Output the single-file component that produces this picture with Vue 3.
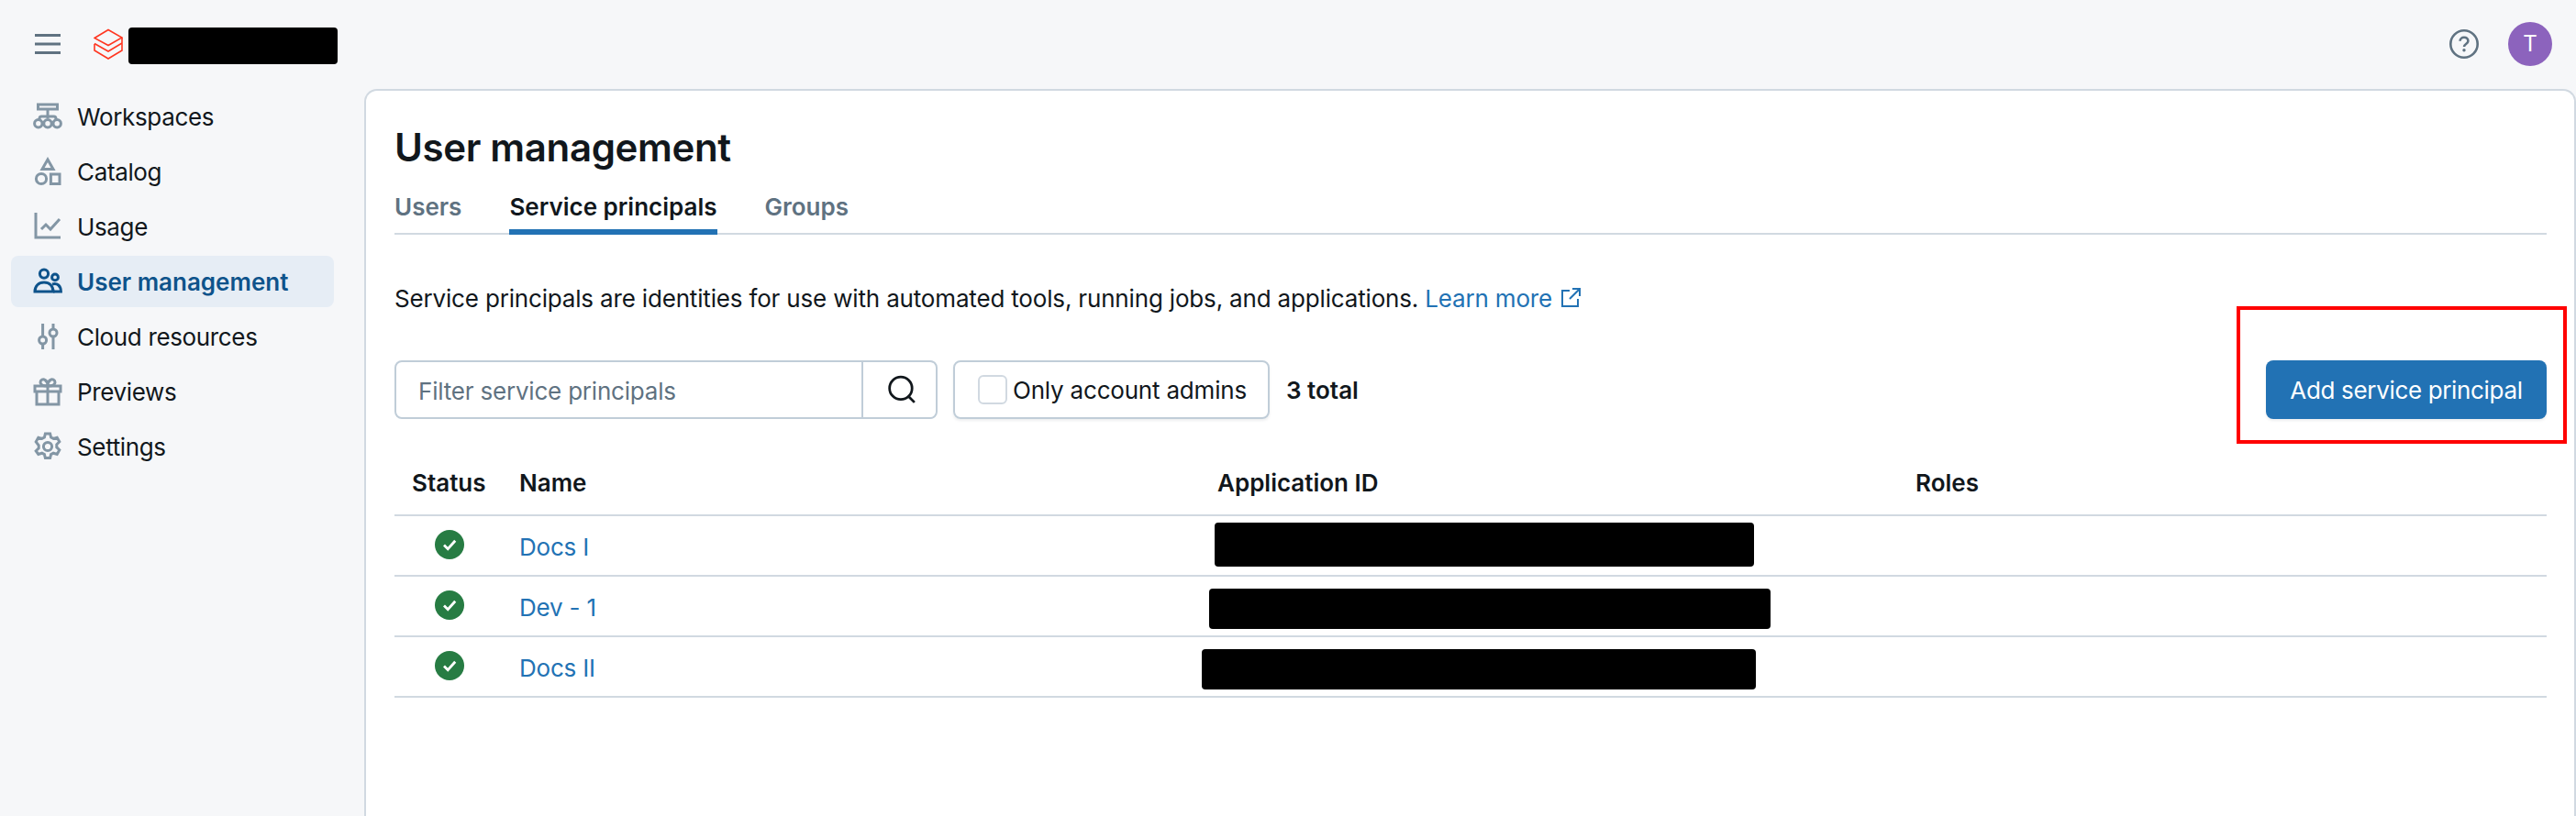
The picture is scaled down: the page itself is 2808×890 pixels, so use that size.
<template>
  <div class="page">
    <header class="topbar">
      <div class="brand">
        <svg class="burger" viewBox="0 0 28 22" fill="none" stroke="#5f7281" stroke-width="3">
          <path d="M0 1.500h28M0 11h28M0 20.500h28" />
        </svg>
        <svg class="logo" viewBox="0 0 32 34" fill="none" stroke="#ff3621" stroke-width="1.600">
          <path d="M1 10.500 16 1.500l15 8.500-15 8.500L1 10.500Z" />
          <path d="M31 10v6l-15 9-15-8.500" />
          <path d="M31 16.500v7.500l-15 9-15-9v-7" />
        </svg>
        <div class="brand-redact"></div>
      </div>
      <div class="top-actions">
        <svg class="help" viewBox="0 0 32 32" fill="none">
          <circle cx="16" cy="16" r="14.700" stroke="#5f7281" stroke-width="2.600" />
          <path d="M11.600 12.800c0-2.500 2-4 4.400-4s4.400 1.500 4.400 3.900c0 3.300-4.400 3.300-4.400 6.300" stroke="#5f7281" stroke-width="2.600" />
          <circle cx="16" cy="22.800" r="1.700" fill="#5f7281" />
        </svg>
        <div class="avatar">T</div>
      </div>
    </header>

    <div class="body">
      <nav class="sidebar">
        <a v-for="item in navItems" :key="item.label" class="nav-item" :class="{ active: item.active }">
          <svg class="nav-icon" viewBox="0 0 16 16" fill="none" stroke="currentColor" stroke-width="1.500">
            <path v-for="d in item.paths" :key="d" :d="d" />
          </svg>
          <span>{{ item.label }}</span>
        </a>
      </nav>

      <main class="panel">
        <h1>User management</h1>
        <div class="tabs">
          <a class="tab">Users</a>
          <a class="tab current">Service principals</a>
          <a class="tab">Groups</a>
        </div>

        <p class="intro">
          Service principals are identities for use with automated tools, running jobs, and applications.
          <a class="link">Learn more
            <svg class="ext" viewBox="0 0 22 22" fill="none" stroke="#2272b4" stroke-width="2">
              <path d="M10 3H2v17h17v-8" />
              <path d="M13 1h8v8M21 1 10 12" />
            </svg>
          </a>
        </p>

        <div class="toolbar">
          <div class="filter">
            <span class="placeholder">Filter service principals</span>
            <button class="search">
              <svg viewBox="0 0 30 30" fill="none" stroke="#11171c" stroke-width="2.600">
                <circle cx="14" cy="13.500" r="11.500" />
                <path d="m22 22 6 6" />
              </svg>
            </button>
          </div>
          <label class="admins">
            <span class="box"></span>
            <span class="admins-text">Only account admins</span>
          </label>
          <span class="total">3 total</span>
          <button class="primary">Add service principal</button>
        </div>

        <div class="table">
          <div class="row head">
            <div class="status-head">Status</div>
            <div>Name</div>
            <div>Application ID</div>
            <div>Roles</div>
          </div>
          <div v-for="row in rows" :key="row.name" class="row">
            <div class="status">
              <svg viewBox="0 0 32 32">
                <circle cx="16" cy="16" r="16" fill="#277c43" />
                <path d="m10 16.500 4.200 4.200 8-9" fill="none" stroke="#fff" stroke-width="2.800" />
              </svg>
            </div>
            <div class="name-cell"><a class="link">{{ row.name }}</a></div>
            <div class="id-cell">
              <div
                class="redact"
                :style="{ marginLeft: row.left + 'px', marginTop: row.top + 'px', width: row.width + 'px', height: row.height + 'px' }"
              ></div>
            </div>
            <div></div>
          </div>
        </div>

        <div class="callout"></div>
      </main>
    </div>
  </div>
</template>

<script setup>
const navItems = [
  {
    label: 'Workspaces',
    paths: [
      'M2.750 1.500h10.500v2.500h-10.500z',
      'M8 4v5M3.500 10V9.200Q3.500 8 4.700 8h6.600Q12.500 8 12.500 9.200V10',
      'M2.900 9.800a2.100 2.100 0 1 0 0 4.200 2.100 2.100 0 0 0 0-4.200ZM8 9.800a2.100 2.100 0 1 0 0 4.200 2.100 2.100 0 0 0 0-4.200ZM13.100 9.800a2.100 2.100 0 1 0 0 4.200 2.100 2.100 0 0 0 0-4.200Z'
    ]
  },
  {
    label: 'Catalog',
    paths: [
      'M8 1.500 11 6.700H5L8 1.500Z',
      'M4.500 9.200a2.800 2.800 0 1 0 0 5.600 2.800 2.800 0 0 0 0-5.600Z',
      'M9.700 9.500h4.800v5.300H9.700z'
    ]
  },
  {
    label: 'Usage',
    paths: ['M1.500 .500v13.500H15', 'M4.500 9.500 7 7l2.500 2.500L14.500 4']
  },
  {
    label: 'User management',
    active: true,
    paths: [
      'M6 1.500a2.300 2.300 0 1 0 0 4.600 2.300 2.300 0 0 0 0-4.600Z',
      'M12 4a1.700 1.700 0 1 0 0 3.400A1.700 1.700 0 0 0 12 4Z',
      'M1 13.500c0-3 2-5 5-5s5 2 5 5H1Z',
      'M10.500 9.500c2.700-.800 4.700.800 4.700 4h-4.200'
    ]
  },
  {
    label: 'Cloud resources',
    paths: [
      'M5.300 1v7M5.300 12v3',
      'M5.300 8a2 2 0 1 0 0 4 2 2 0 0 0 0-4Z',
      'M11 1v3M11 8v7',
      'M11 4a2 2 0 1 0 0 4 2 2 0 0 0 0-4Z'
    ]
  },
  {
    label: 'Previews',
    paths: [
      'M1 5h14v3H1z',
      'M2 8v7h12V8M8 5v10',
      'M8 5C6 5 4 4.500 4 3c0-1.300 1.500-2 2.500-1.300C7.500 2.300 8 3.500 8 5Zm0 0c2 0 4-.500 4-2 0-1.300-1.500-2-2.500-1.300C8.500 2.300 8 3.500 8 5Z'
    ]
  },
  {
    label: 'Settings',
    paths: [
      'M8 5.700a2.300 2.300 0 1 0 0 4.600 2.300 2.300 0 0 0 0-4.600Z',
      'M6.700 1h2.600l.5 2 1.300.7 2-.6 1.300 2.300-1.500 1.500v1.500l1.500 1.500-1.300 2.300-2-.6-1.300.7-.5 2H6.700l-.5-2-1.300-.7-2 .6L1.600 10.400l1.500-1.500V7.400L1.600 5.400l1.300-2.300 2 .6 1.300-.7.500-2Z'
    ]
  }
]

const rows = [
  { name: 'Docs I', left: -3, top: -2, width: 588, height: 48 },
  { name: 'Dev - 1', left: -9, top: 6, width: 612, height: 44 },
  { name: 'Docs II', left: -17, top: 6, width: 604, height: 44 }
]
</script>

<style scoped>
.page {
  width: 2808px;
  height: 890px;
  overflow: hidden;
  display: flex;
  flex-direction: column;
  background: #f6f7f9;
  color: #11171c;
  font-family: Inter, "Liberation Sans", sans-serif;
  font-size: 26px;
  letter-spacing: -0.2px;
}

.topbar {
  height: 97px;
  flex: none;
  display: flex;
  align-items: center;
  justify-content: space-between;
  padding: 0 26px 2px 38px;
  box-sizing: border-box;
}

.brand {
  display: flex;
  align-items: center;
}

.burger {
  width: 28px;
  height: 22px;
}

.logo {
  width: 32px;
  height: 34px;
  margin-left: 36px;
}

.brand-redact {
  width: 228px;
  height: 40px;
  margin: 4px 0 0 6px;
  background: #000;
  border-radius: 4px;
}

.top-actions {
  display: flex;
  align-items: center;
  gap: 32px;
}

.help {
  width: 32px;
  height: 32px;
}

.avatar {
  width: 48px;
  height: 48px;
  border-radius: 50%;
  background: #8c63bd;
  color: #fff;
  display: flex;
  align-items: center;
  justify-content: center;
  font-size: 24px;
}

.body {
  flex: 1;
  display: flex;
  min-height: 0;
}

.sidebar {
  width: 397px;
  flex: none;
  box-sizing: border-box;
  padding: 2px 33px 0 12px;
  display: flex;
  flex-direction: column;
  gap: 4px;
}

.nav-item {
  height: 56px;
  display: flex;
  align-items: center;
  gap: 16px;
  padding-left: 24px;
  border-radius: 8px;
  letter-spacing: -0.35px;
}

.nav-item .nav-icon {
  width: 32px;
  height: 32px;
  color: #8396a5;
  flex: none;
}

.nav-item.active {
  background: #e6edf5;
  color: #0e538b;
  font-weight: 600;
  letter-spacing: 0;
}

.nav-item.active .nav-icon {
  color: #0e538b;
}

.panel {
  flex: 1;
  position: relative;
  background: #fff;
  border: 2px solid #d1d9e1;
  border-bottom: 0;
  border-radius: 14px 14px 0 0;
  padding: 32px 30px 0 31px;
  box-sizing: border-box;
}

h1 {
  margin: 0;
  font-size: 42px;
  line-height: 60px;
  font-weight: 600;
  letter-spacing: -0.35px;
}

.tabs {
  display: flex;
  gap: 52px;
  height: 62px;
  margin-top: 3px;
  box-sizing: border-box;
  border-bottom: 2px solid #d1d9e1;
  align-items: flex-start;
}

.tab {
  height: 62px;
  box-sizing: border-box;
  padding-top: 15px;
  line-height: 34px;
  color: #5f7281;
  font-weight: 600;
  letter-spacing: 0;
}

.tab.current {
  color: #11171c;
  border-bottom: 6px solid #2272b4;
}

.intro {
  margin: 52px 0 0;
  line-height: 36px;
  letter-spacing: -0.17px;
}

.link {
  color: #2272b4;
}

.ext {
  width: 22px;
  height: 22px;
  margin-left: 2px;
  vertical-align: -1px;
}

.toolbar {
  display: flex;
  align-items: center;
  margin-top: 49px;
  height: 64px;
}

.filter {
  width: 592px;
  height: 64px;
  box-sizing: border-box;
  display: flex;
  align-items: center;
  border: 2px solid #c0cdd8;
  border-radius: 8px;
}

.placeholder {
  flex: 1;
  padding: 2px 0 0 24px;
  color: #5f7281;
}

.search {
  width: 81px;
  height: 100%;
  padding: 0 0 0 4px;
  background: none;
  border: 0;
  border-left: 2px solid #c0cdd8;
  display: flex;
  align-items: center;
  justify-content: center;
}

.search svg {
  width: 32px;
  height: 32px;
}

.admins {
  width: 345px;
  height: 64px;
  margin-left: 17px;
  box-sizing: border-box;
  display: flex;
  align-items: center;
  gap: 6px;
  padding-left: 25px;
  border: 2px solid #c0cdd8;
  border-radius: 8px;
  box-shadow: 0 2px 3px rgba(31, 39, 45, 0.08);
}

.admins-text {
  padding-top: 1px;
}

.box {
  width: 32px;
  height: 32px;
  box-sizing: border-box;
  border: 2px solid #d1d9e1;
  border-radius: 6px;
}

.total {
  margin-left: 18px;
  padding-top: 1px;
  font-weight: 600;
  letter-spacing: 0;
}

.primary {
  margin-left: auto;
  width: 306px;
  height: 64px;
  padding: 1px 0 0;
  background: #2272b4;
  color: #fff;
  border: 0;
  border-radius: 8px;
  font: inherit;
  letter-spacing: -0.34px;
  box-shadow: 0 2px 3px rgba(31, 39, 45, 0.08);
}

.table {
  margin-top: 34px;
}

.row {
  display: grid;
  grid-template-columns: 136px 761px 761px 1fr;
  height: 66px;
  box-sizing: border-box;
  align-items: center;
  border-bottom: 2px solid #d1d9e1;
}

.row.head {
  height: 72px;
  font-weight: 600;
  letter-spacing: 0;
}

.status-head {
  padding-left: 19px;
}

.status {
  display: flex;
  justify-content: center;
  width: 120px;
  margin-bottom: 2px;
}

.status svg {
  width: 32px;
  height: 32px;
}

.name-cell {
  padding-top: 2px;
}

.id-cell {
  display: flex;
  align-items: center;
  height: 100%;
}

.redact {
  background: #000;
  border-radius: 4px;
  flex: none;
}

.callout {
  position: absolute;
  left: 2039px;
  top: 235px;
  width: 360px;
  height: 150px;
  box-sizing: border-box;
  border: 4px solid #ff0000;
}
</style>

<style>
html,
body {
  margin: 0;
  background: #f6f7f9;
}
</style>
